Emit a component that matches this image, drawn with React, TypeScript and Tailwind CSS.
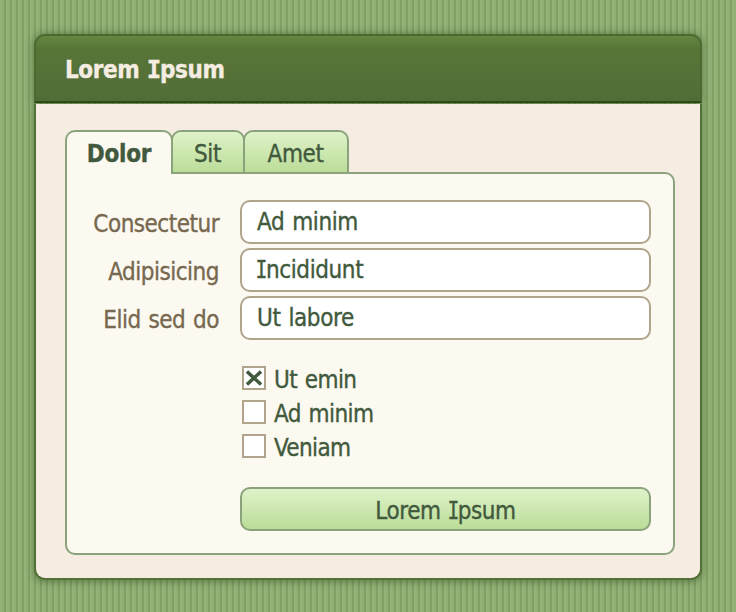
import type { ReactNode } from 'react';

const TABS = [
    { label: 'Sit', box: 'z-10 w-[74px] pr-px' },
    { label: 'Amet', box: 'z-20 w-[106px] pr-px' },
];

const FIELDS = [
    { label: 'Consectetur', value: 'Ad minim' },
    { label: 'Adipisicing', value: 'Incididunt' },
    { label: 'Elid sed do', value: 'Ut labore' },
];

const OPTIONS = [
    { label: 'Ut emin', checked: true },
    { label: 'Ad minim', checked: false },
    { label: 'Veniam', checked: false },
];

// Capital I with slab ends, borrowed from the mono face and squeezed to fit
function SlabI({ bold = false }: { bold?: boolean }) {
    return (
        <span
            className={
                bold
                    ? "inline-flex w-[12px] justify-center font-['DejaVu_Sans_Mono',monospace] tracking-normal"
                    : "inline-flex w-[9px] scale-x-[0.82] justify-center font-['DejaVu_Sans_Mono',monospace] tracking-normal"
            }
        >
            I
        </span>
    );
}

// Only the capital I is wrapped, the rest stays as whole strings
function withSlab(text: string, bold = false): ReactNode {
    const [before, after] = text.split('I');
    if (after === undefined) return text;
    return (
        <>
            {before}
            <SlabI bold={bold} />
            {after}
        </>
    );
}

function Checkbox({ label, checked }: { label: string; checked: boolean }) {
    return (
        <label className="flex h-[34px] items-start">
            <span className="flex size-6 items-center justify-center border-2 border-[#b0a58c] bg-white">
                {checked && (
                    <svg width="16" height="16" viewBox="0 0 16 16" fill="none" stroke="#41593c" strokeWidth="3.4">
                        <path d="M1 1.5 15 14.5M15 1.5 1 14.5" />
                    </svg>
                )}
            </span>
            <span className="ml-2 leading-[29px] tracking-[-0.6px]">{label}</span>
        </label>
    );
}

export default function App() {
    return (
        <div className="h-[612px] w-[736px] overflow-hidden bg-[repeating-linear-gradient(90deg,#95b378_0px,#95b378_2px,#90af73_2px,#90af73_4px,#80a066_4px,#80a066_6px)] px-[34px] pt-[34px] font-['DejaVu_Sans_Condensed','DejaVu_Sans',sans-serif] text-[24px] tracking-[-0.4px] text-[#41593c] [-webkit-text-stroke:0.35px] [font-stretch:condensed] [word-spacing:1.5px]">
            <header className="flex h-[69px] items-center rounded-t-[11px] border-2 border-[#4a6a30] border-b-[#2f4a17] bg-linear-to-b from-[#648741] via-[#587538] via-20% to-[#526d37] pt-0.5 pl-[29px] text-[24px] leading-[28px] font-bold tracking-[-0.4px] text-[#f5ede2] shadow-[0_0_8px_rgba(50,75,30,0.6)]">
                <h1>{withSlab('Lorem Ipsum', true)}</h1>
            </header>

            <main className="mt-px h-[476px] rounded-b-[11px] border-2 border-t-0 border-[#527037] bg-[#f5ede2] px-[29px] pt-[26px] shadow-[0_2px_7px_rgba(50,75,30,0.5)]">
                <nav className="relative z-10 flex h-11 leading-[45px]">
                    <div className="z-30 h-11 w-[108px] rounded-t-[10px] border-2 border-b-0 border-[#8aa37c] bg-[#fcf9f0] text-center font-bold tracking-[-0.2px]">
                        Dolor
                    </div>
                    {TABS.map((tab) => (
                        <div
                            key={tab.label}
                            className={`-ml-0.5 h-11 rounded-t-[10px] border-2 border-[#8aa37c] bg-linear-to-b from-[#dff2c9] to-[#bbdd98] text-center ${tab.box}`}
                        >
                            {tab.label}
                        </div>
                    ))}
                </nav>

                <section className="-mt-0.5 h-[383px] w-[610px] rounded-[10px] rounded-tl-none border-2 border-[#8aa37c] bg-[#fcf9f0] pt-[26px] pr-[22px]">
                    <div className="space-y-1">
                        {FIELDS.map((field) => (
                            <div key={field.label} className="flex h-11">
                                <span className="w-[152px] text-right leading-[49px] tracking-[-0.5px] text-[#776850]">
                                    {field.label}
                                </span>
                                <div className="ml-[21px] flex-1 rounded-[10px] border-2 border-[#b0a58c] bg-white pl-[15px] leading-[41px]">
                                    {withSlab(field.value)}
                                </div>
                            </div>
                        ))}
                    </div>

                    <div className="mt-[26px] ml-[175px] h-[102px]">
                        {OPTIONS.map((option) => (
                            <Checkbox key={option.label} {...option} />
                        ))}
                    </div>

                    <button className="mt-[19px] ml-[173px] flex h-11 w-[411px] items-center justify-center rounded-[10px] border-2 border-[#8aa37c] bg-linear-to-b from-[#dff2c9] to-[#bbdd98] pt-[3px] leading-[28px] tracking-[-0.4px] [word-spacing:1.5px]">
                        <span>{withSlab('Lorem Ipsum')}</span>
                    </button>
                </section>
            </main>
        </div>
    );
}
